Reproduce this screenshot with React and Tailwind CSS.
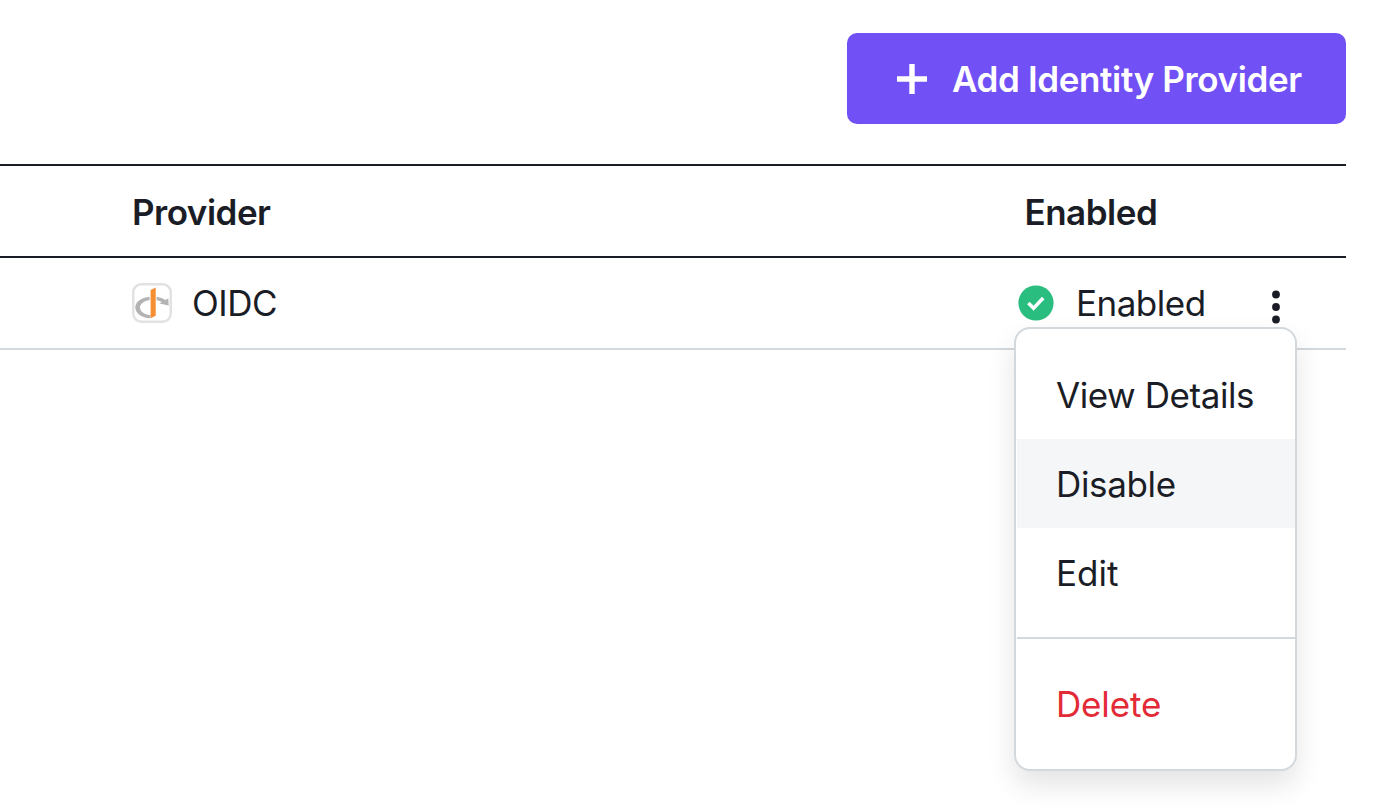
const menuItem = "flex h-[89px] items-center whitespace-nowrap pt-[2px]";

function OpenIdIcon() {
  return (
    <svg className="h-10 w-10 shrink-0" viewBox="0 0 40 40">
      <rect x="1.25" y="1.25" width="37.5" height="37.5" rx="8" fill="#fff" stroke="#e2e2e2" strokeWidth="2.5" />
      <path d="M17.6 13.7C9.5 14.4 3.3 18.8 3.3 24.4C3.3 30.2 9.6 34.7 18.5 35.3V32.2C12 31.4 8 28.6 8 24.6C8 21 12 18 17.6 17.1Z" fill="#b3b3b3" />
      <path d="M24.6 13.8C27.8 14.3 30.8 15.4 33.2 17L36.3 15.4L36.7 22.4L27.3 20.4L29.8 18.9C28.4 18.2 26.6 17.5 24.6 17.2Z" fill="#b3b3b3" />
      <path d="M18.6 7L23.7 4.5V32.7L18.6 35.3Z" fill="#f68e32" />
    </svg>
  );
}

function Menu() {
  return (
    <div className="absolute left-[1014px] top-[69px] z-10 h-[444px] w-[283px] rounded-[16px] border-2 border-[#d3d8dd] bg-white pt-[21px] shadow-[0_14px_28px_rgba(0,0,0,0.11)]">
      <div className={menuItem + " pl-[40px] tracking-[-0.43px]"}>View Details</div>
      <div className={menuItem + " ml-px bg-[#f5f6f8] pl-[39px] tracking-[-0.35px]"}>Disable</div>
      <div className={menuItem + " pl-[40px]"}>Edit</div>
      <div className="ml-px mt-5 h-0.5 bg-[#d3d8dd]" />
      <div className={menuItem + " mt-[20px] pl-[40px] tracking-[-0.15px] text-[#e32b37]"}>Delete</div>
    </div>
  );
}

export default function App() {
  return (
    <div className="h-[806px] w-full overflow-hidden bg-white pr-[52px] font-[Inter,sans-serif] text-[35px] leading-none font-[430] text-[#1b1d26]">
      <div className="flex h-[164px] items-start justify-end pt-[33px]">
        <button className="flex h-[91px] w-[499px] items-center rounded-[10px] bg-[#7150f6] pl-[50px] text-white">
          <svg className="h-[30px] w-[30px] shrink-0" viewBox="0 0 30 30">
            <path d="M0 15H30M15 0V30" stroke="currentColor" strokeWidth="5.4" />
          </svg>
          <span className="ml-[25px] whitespace-nowrap pt-[2px] font-[560] tracking-[-0.37px]">Add Identity Provider</span>
        </button>
      </div>
      <div className="flex h-[94px] items-center border-y-2 border-[#1b1d26] pt-[2px] font-[560] tracking-[-0.5px]">
        <div className="w-[892.5px] pl-[132px]">Provider</div>
        <div className="pl-[132px]">Enabled</div>
      </div>
      <div className="relative flex h-[92px] items-center border-b-2 border-[#d3d8dd]">
        <div className="flex w-[1018px] items-center pl-[132px]">
          <OpenIdIcon />
          <span className="ml-5 pt-px tracking-[-0.5px]">OIDC</span>
        </div>
        <svg className="h-9 w-9 shrink-0" viewBox="0 0 36 36">
          <circle cx="18" cy="18" r="17.6" fill="#29bd7f" />
          <path d="M10.4 18L15.6 23.2L25.2 13" fill="none" stroke="#fff" strokeWidth="3.5" />
        </svg>
        <span className="ml-[22px] w-[196px] pt-px tracking-[-0.5px]">Enabled</span>
        <svg className="mt-[8px] h-[34px] w-2 shrink-0" viewBox="0 0 8 34">
          <circle cx="4" cy="4.5" r="3.9" fill="currentColor" />
          <circle cx="4" cy="17" r="3.9" fill="currentColor" />
          <circle cx="4" cy="29.5" r="3.9" fill="currentColor" />
        </svg>
        <Menu />
      </div>
    </div>
  );
}
